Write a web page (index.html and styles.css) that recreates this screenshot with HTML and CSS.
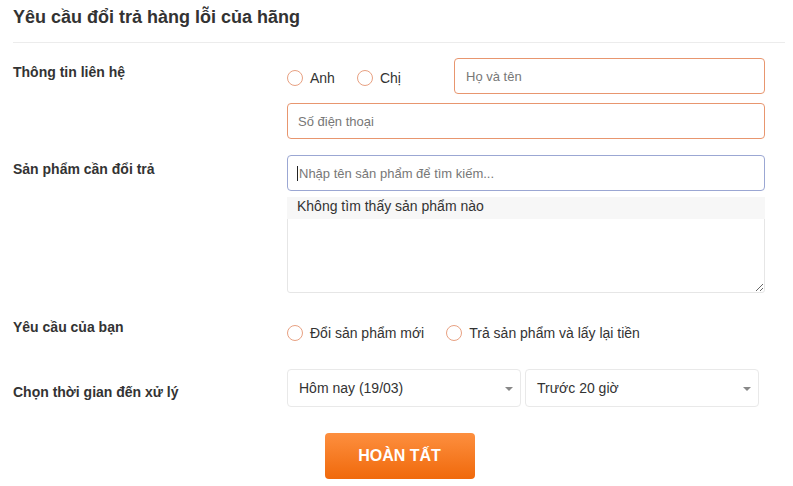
FILE: index.html
```html
<!DOCTYPE html>
<html lang="vi">
<head>
  <meta charset="UTF-8">
  <title>Yêu cầu đổi trả hàng lỗi của hãng</title>
  <meta name="viewport" content="width=device-width, initial-scale=1.0">
  <link rel="stylesheet" href="styles.css">
</head>
<body>
  <div class="wrap">
    <h2 class="title">Yêu cầu đổi trả hàng lỗi của hãng</h2>

    <form class="form">
      <div class="row row-contact">
        <div class="label">Thông tin liên hệ</div>
        <div class="field">
          <div class="line">
            <label class="radio"><span class="dot"></span>Anh</label>
            <label class="radio"><span class="dot"></span>Chị</label>
            <input class="input input-name" type="text" placeholder="Họ và tên">
          </div>
          <input class="input" type="text" placeholder="Số điện thoại">
        </div>
      </div>

      <div class="row row-product">
        <div class="label">Sản phẩm cần đổi trả</div>
        <div class="field">
          <div class="search">
            <input class="input input-search" type="text" placeholder="Nhập tên sản phẩm để tìm kiếm...">
          </div>
          <div class="note-box">
            <textarea class="note"></textarea>
            <div class="suggest">Không tìm thấy sản phẩm nào</div>
          </div>
        </div>
      </div>

      <div class="row row-request">
        <div class="label">Yêu cầu của bạn</div>
        <div class="field line">
          <label class="radio"><span class="dot"></span>Đổi sản phẩm mới</label>
          <label class="radio"><span class="dot"></span>Trả sản phẩm và lấy lại tiền</label>
        </div>
      </div>

      <div class="row row-time">
        <div class="label">Chọn thời gian đến xử lý</div>
        <div class="field selects">
          <div class="select">Hôm nay (19/03)<span class="caret"></span></div>
          <div class="select">Trước 20 giờ<span class="caret"></span></div>
        </div>
      </div>

      <div class="actions">
        <button type="button" class="btn">HOÀN TẤT</button>
      </div>
    </form>
  </div>
</body>
</html>
```
FILE: styles.css
```css
* {
  box-sizing: border-box;
}
body {
  margin: 0;
  background: #fff;
  color: #333;
  font-family: "Liberation Sans", Arial, sans-serif;
  font-size: 14px;
}
.wrap {
  width: 772px;
  margin-left: 13px;
}
.title {
  margin: 6px 0 0;
  padding-bottom: 14px;
  border-bottom: 1px solid #ececec;
  font-size: 18px;
  line-height: 22px;
  font-weight: bold;
  color: #333;
}
.form {
  padding-top: 15px;
}
.row {
  display: flex;
}
.label {
  width: 274px;
  flex-shrink: 0;
  font-size: 14px;
  font-weight: bold;
  line-height: 18px;
  color: #333;
}
.field {
  width: 478px;
  display: flex;
  flex-direction: column;
}
.line {
  display: flex;
  flex-direction: row;
  align-items: center;
}

/* row spacing */
.row-contact .label {
  padding-top: 5px;
}
.row-contact .line {
  margin-bottom: 9px;
}
.row-contact .radio {
  padding-top: 4px;
}
.row-product {
  margin-top: 16px;
}
.row-product .label {
  padding-top: 5px;
}
.row-request {
  margin-top: 22px;
}
.row-request .label {
  padding-top: 3px;
}
.row-request .field {
  height: 36px;
}
.row-time {
  margin-top: 18px;
}
.row-time .label {
  padding-top: 14px;
}

/* radios */
.radio {
  display: flex;
  align-items: center;
  margin-right: 22px;
  font-size: 14px;
  color: #333;
  cursor: pointer;
}
.dot {
  width: 16px;
  height: 16px;
  border: 1px solid #e8a182;
  border-radius: 50%;
  margin-right: 7px;
  background: #fff;
}

/* inputs */
.input {
  height: 36px;
  width: 100%;
  padding: 0 10px;
  border: 1px solid #e8966f;
  border-radius: 4px;
  font-family: inherit;
  font-size: 13px;
  color: #333;
  outline: none;
}
.input::placeholder {
  color: #777;
}
.input-name {
  width: 311px;
  margin-left: auto;
  padding-left: 11px;
}
.search {
  position: relative;
}
.search::before {
  content: "";
  position: absolute;
  left: 10px;
  top: 11px;
  width: 1px;
  height: 15px;
  background: #222;
}
.input-search {
  border-color: #9ba7d3;
  padding-left: 11px;
}
.note-box {
  position: relative;
  margin-top: 6px;
}
.note {
  display: block;
  width: 100%;
  height: 96px;
  border: 1px solid #e6e6e6;
  border-radius: 3px;
  font-family: inherit;
  resize: vertical;
  outline: none;
}
.suggest {
  position: absolute;
  left: 0;
  right: 0;
  top: 0;
  height: 22px;
  padding-left: 10px;
  background: #f7f7f7;
  font-size: 14px;
  line-height: 19px;
  color: #333;
}

/* selects */
.selects {
  flex-direction: row;
  gap: 4px;
}
.select {
  position: relative;
  width: 234px;
  height: 38px;
  padding-left: 11px;
  border: 1px solid #e9e9e9;
  border-radius: 4px;
  font-size: 14px;
  line-height: 36px;
  color: #333;
}
.caret {
  position: absolute;
  right: 7px;
  top: 17px;
  width: 0;
  height: 0;
  border-left: 4px solid transparent;
  border-right: 4px solid transparent;
  border-top: 4px solid #888;
}

/* submit */
.actions {
  display: flex;
  justify-content: center;
  margin-top: 26px;
  padding-left: 1px;
}
.btn {
  width: 150px;
  height: 46px;
  border: none;
  border-radius: 4px;
  background: linear-gradient(#fd8f3f, #f0690b);
  color: #fff;
  font-family: inherit;
  font-size: 16px;
  font-weight: bold;
  cursor: pointer;
}
```
